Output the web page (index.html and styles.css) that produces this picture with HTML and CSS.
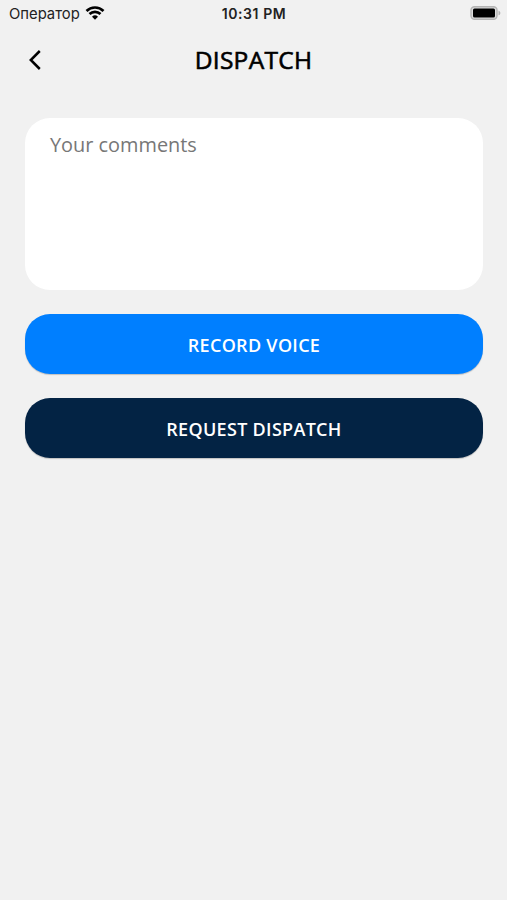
FILE: index.html
```html
<!DOCTYPE html>
<html lang="en">
<head>
<meta charset="utf-8">
<title>Dispatch</title>
<link rel="stylesheet" href="styles.css">
</head>
<body>
<div class="status">
  <div class="carrier"><span>Оператор</span>
    <svg class="wifi" width="20" height="14" viewBox="0 0 20 14"><path d="M1.500 4.900a12.300 12.300 0 0 1 17 0M4.500 8.100a8 8 0 0 1 11 0" fill="none" stroke="#000" stroke-width="2.700"/><path d="M7 10.800a4.300 4.300 0 0 1 6 0L10 13.800z"/></svg>
  </div>
  <time class="clock">10:31 PM</time>
  <svg class="battery" width="31" height="14" viewBox="0 0 31 14"><rect x="1" y=".8" width="26" height="12.400" rx="3.500" fill="#ddd" stroke="#b4b4b4" stroke-width="1.400"/><rect x="3" y="2.500" width="22" height="9" rx="1.500"/><path d="M28.500 4.700c2.500.7 2.500 3.900 0 4.600z" fill="#b4b4b4"/></svg>
</div>
<header class="header">
  <button class="back" aria-label="Back"><svg width="14" height="22" viewBox="0 0 14 22"><path d="M11.800 2 2.800 11l9 9" fill="none" stroke="#000" stroke-width="2.500"/></svg></button>
  <h1 class="title">DISPATCH</h1>
</header>
<main class="form">
  <textarea class="comments" placeholder="Your comments"></textarea>
  <button class="action record">RECORD VOICE</button>
  <button class="action request">REQUEST DISPATCH</button>
</main>
</body>
</html>
```
FILE: styles.css
```css
* { box-sizing: border-box; }
body { margin: 0; min-height: 900px; background: #f1f1f1; color: #000; font-family: "Open Sans", sans-serif; }
button { border: 0; padding: 0; background: none; font: inherit; }
svg { display: block; }
.status { display: grid; grid-template-columns: 1fr auto 1fr; align-items: center; height: 27px; padding: 0 6px 0 9px; font: 14.8px/27px Inter, sans-serif; color: #222; }
.carrier { display: flex; align-items: center; gap: 5px; }
.carrier span { padding-top: 1px; }
.wifi { margin-top: -3px; }
.clock { font-weight: 600; font-size: 14px; letter-spacing: .6px; margin: -2px 0 0 -2px; }
.battery { justify-self: end; margin-top: -2px; }
.header { display: grid; grid-template-columns: 60px 1fr 60px; height: 66px; align-items: center; }
.back { display: flex; padding-left: 28px; }
.title { margin: -2px 0 0; text-align: center; font-size: 24.5px; font-weight: 400; letter-spacing: .3px; -webkit-text-stroke: .6px #000; }
.form { display: flex; flex-direction: column; gap: 24px; padding: 25px 24px 0 25px; }
.comments { height: 172px; border: 0; border-radius: 25px; padding: 12px 25px; resize: none; background: #fff; font: 19.9px/30px "Open Sans", sans-serif; outline: 0; }
.comments::placeholder { color: #777; opacity: 1; }
.action { height: 60px; padding-top: 2px; border-radius: 25px; color: #fff; font-size: 18px; font-weight: 600; letter-spacing: .3px; box-shadow: 0 1px 1px rgba(0,0,0,.2); }
.record { background: #007fff; }
.request { background: #032344; }
```
